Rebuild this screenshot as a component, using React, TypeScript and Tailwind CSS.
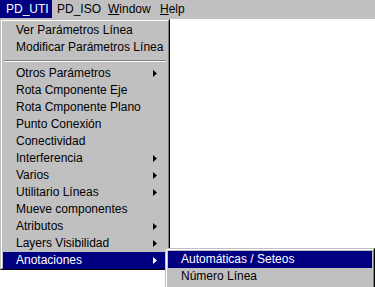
import React from "react";

const font = { fontFamily: '"Liberation Sans", Arial, sans-serif' };

function Arrow({ white }: { white?: boolean }) {
  return (
    <svg width="4" height="7" viewBox="0 0 4 7" className="absolute right-[10px] top-[5px]">
      <path d="M0 0 L4 3.5 L0 7 Z" fill={white ? "#fff" : "#000"} />
    </svg>
  );
}

type Item = { label: string; sub?: boolean; sel?: boolean } | "sep";

const items: Item[] = [
  { label: "Ver Parámetros Línea" },
  { label: "Modificar Parámetros Línea" },
  "sep",
  { label: "Otros Parámetros", sub: true },
  { label: "Rota Cmponente Eje" },
  { label: "Rota Cmponente Plano" },
  { label: "Punto Conexión" },
  { label: "Conectividad" },
  { label: "Interferencia", sub: true },
  { label: "Varios", sub: true },
  { label: "Utilitario Líneas", sub: true },
  { label: "Mueve componentes" },
  { label: "Atributos", sub: true },
  { label: "Layers Visibilidad", sub: true },
  { label: "Anotaciones", sub: true, sel: true },
];

export default function App() {
  return (
    <div className="relative w-[375px] h-[287px] bg-white overflow-hidden text-[12px] leading-[17px] text-black" style={font}>
      <div className="flex h-[19px] bg-[#c0c0c0] items-start">
        <div className="h-[18px] w-[52px] bg-[#000080] text-white pl-[6px] leading-[18px]">PD_UTI</div>
        <div className="h-[18px] pl-[5px] leading-[18px] w-[51px]">PD_ISO</div>
        <div className="h-[18px] pl-[5px] leading-[18px] w-[52px]"><span className="underline">W</span>indow</div>
        <div className="h-[18px] pl-[5px] leading-[18px]"><span className="underline">H</span>elp</div>
      </div>
      <div className="absolute left-0 top-[19px] w-[170px] h-[251px] bg-[#c0c0c0] border border-[#c0c0c0] border-r-black border-b-black">
        <div className="h-full w-full border border-white border-r-[#808080] border-b-[#808080] px-[1px] py-[1px]">
          {items.map((it, i) =>
            it === "sep" ? (
              <div key={i} className="h-[9px] flex flex-col justify-center px-[1px]">
                <div className="h-[1px] bg-[#808080]" />
                <div className="h-[1px] bg-white" />
              </div>
            ) : (
              <div
                key={i}
                className={`relative h-[17px] pl-[13px] ${it.sel ? "bg-[#000080] text-white" : ""}`}
              >
                {it.label}
                {it.sub && <Arrow white={it.sel} />}
              </div>
            )
          )}
        </div>
      </div>
      <div className="absolute left-[165px] top-[248px] w-[210px] h-[41px] bg-[#c0c0c0] border border-[#c0c0c0] border-r-black border-b-black">
        <div className="h-full w-full border border-white border-r-[#808080] border-b-[#808080] px-[1px] py-[1px]">
          <div className="h-[17px] pl-[13px] bg-[#000080] text-white">Automáticas / Seteos</div>
          <div className="h-[17px] pl-[13px]">Número Línea</div>
        </div>
      </div>
    </div>
  );
}
